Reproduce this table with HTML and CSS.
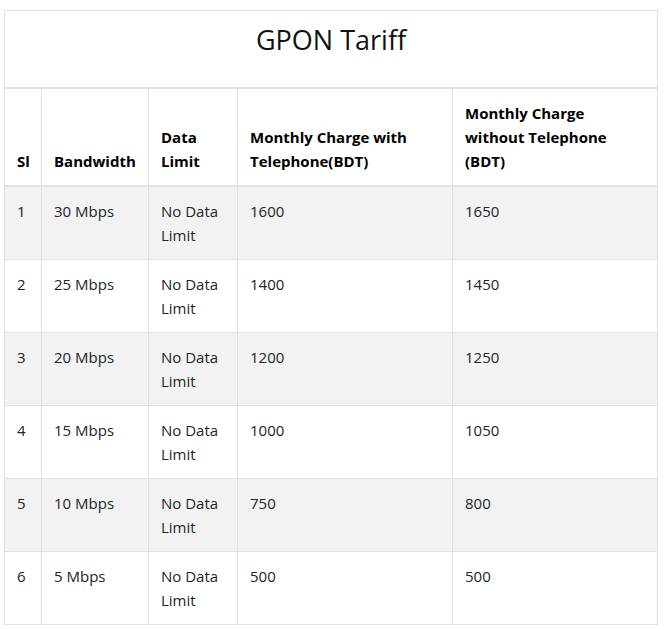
FILE: index.html
```html
<!DOCTYPE html>
<html>
<head>
<meta charset="utf-8">
<link rel="stylesheet" href="styles.css">
</head>
<body>
<table class="tariff">
  <colgroup>
    <col class="c1"><col class="c2"><col class="c3"><col class="c4"><col class="c5">
  </colgroup>
  <thead>
    <tr><th colspan="5" class="title-cell"><h3 class="title">GPON Tariff</h3></th></tr>
    <tr class="head">
      <th>Sl</th>
      <th>Bandwidth</th>
      <th>Data Limit</th>
      <th>Monthly Charge with Telephone(BDT)</th>
      <th>Monthly Charge without Telephone (BDT)</th>
    </tr>
  </thead>
  <tbody>
    <tr><td>1</td><td>30 Mbps</td><td>No Data Limit</td><td>1600</td><td>1650</td></tr>
    <tr><td>2</td><td>25 Mbps</td><td>No Data Limit</td><td>1400</td><td>1450</td></tr>
    <tr><td>3</td><td>20 Mbps</td><td>No Data Limit</td><td>1200</td><td>1250</td></tr>
    <tr><td>4</td><td>15 Mbps</td><td>No Data Limit</td><td>1000</td><td>1050</td></tr>
    <tr><td>5</td><td>10 Mbps</td><td>No Data Limit</td><td>750</td><td>800</td></tr>
    <tr><td>6</td><td>5 Mbps</td><td>No Data Limit</td><td>500</td><td>500</td></tr>
  </tbody>
</table>
</body>
</html>
```
FILE: styles.css
```css
html, body { margin: 0; padding: 0; background: #fff; }
body {
  padding: 10px 10px 0 4px;
  font-family: "Open Sans", "Noto Sans", sans-serif;
  font-size: 15px;
  line-height: 24px;
  color: #212529;
}
.tariff {
  border-collapse: collapse;
  table-layout: fixed;
  width: 653px;
  border: 1px solid #dee2e6;
}
.c1 { width: 37px; }
.c2 { width: 107px; }
.c3 { width: 89px; }
.c4 { width: 215px; }
.c5 { width: 205px; }
.tariff th, .tariff td {
  padding: 12px;
  border: 1px solid #dee2e6;
  text-align: left;
  vertical-align: top;
}
.tariff thead th { vertical-align: bottom; border-bottom-width: 2px; }
.tariff .head th { font-weight: 700; color: #000; }
.title-cell { text-align: center !important; }
.title {
  margin: 0 0 18px 0;
  font-size: 27px;
  line-height: 34px;
  font-weight: 400;
  color: #111;
  text-align: center;
}
.tariff tbody tr:nth-child(odd) { background: #f2f2f2; }
.tariff tbody td { height: 48px; }
```
